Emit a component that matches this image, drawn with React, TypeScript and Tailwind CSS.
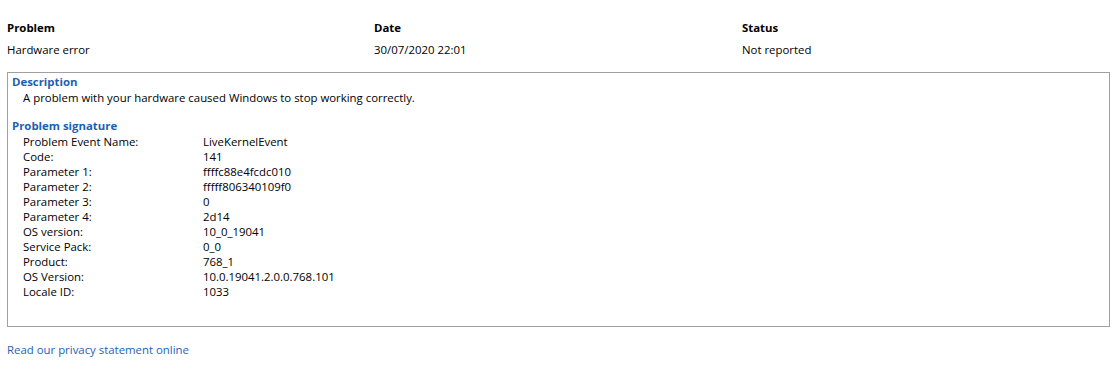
import React from "react";

const rows: [string, string][] = [
  ["Problem Event Name:", "LiveKernelEvent"],
  ["Code:", "141"],
  ["Parameter 1:", "ffffc88e4fcdc010"],
  ["Parameter 2:", "fffff806340109f0"],
  ["Parameter 3:", "0"],
  ["Parameter 4:", "2d14"],
  ["OS version:", "10_0_19041"],
  ["Service Pack:", "0_0"],
  ["Product:", "768_1"],
  ["OS Version:", "10.0.19041.2.0.0.768.101"],
  ["Locale ID:", "1033"],
];

export default function App() {
  return (
    <div
      className="w-[1115px] h-[371px] bg-white text-[11.4px] leading-[15px] text-black overflow-hidden"
      style={{ fontFamily: '"Open Sans", "Noto Sans", sans-serif' }}
    >
      <div className="pt-[20px] pl-[7px] grid grid-cols-[367px_368px_1fr] font-bold">
        <div>Problem</div>
        <div>Date</div>
        <div>Status</div>
      </div>
      <div className="pt-[7px] pl-[7px] grid grid-cols-[367px_368px_1fr]">
        <div>Hardware error</div>
        <div>30/07/2020 22:01</div>
        <div>Not reported</div>
      </div>
      <div className="mt-[15px] ml-[7px] w-[1103px] h-[255px] border border-[#a0a0a0] pl-[4px] pt-[1px]">
        <div className="font-bold text-[#1c5fb0]">Description</div>
        <div className="pl-[11px] pt-[1px]">
          A problem with your hardware caused Windows to stop working correctly.
        </div>
        <div className="font-bold text-[#1c5fb0] mt-[13px]">Problem signature</div>
        <div className="pl-[11px] pt-[1px]">
          {rows.map(([k, v]) => (
            <div key={k} className="grid grid-cols-[180px_1fr]">
              <div>{k}</div>
              <div>{v}</div>
            </div>
          ))}
        </div>
      </div>
      <div className="pl-[7px] pt-[15px] text-[#1c62b8]">Read our privacy statement online</div>
    </div>
  );
}
